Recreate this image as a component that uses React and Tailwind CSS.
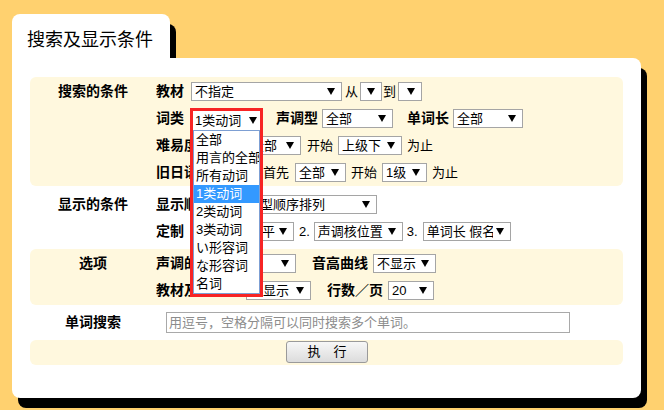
import React from "react";

const Arrow = () => (
  <span className="ml-auto shrink-0 w-0 h-0 border-x-[4px] border-x-transparent border-t-[7px] border-t-black" />
);

const Sel = ({ className = "", text }) => (
  <div
    className={`flex items-center h-[19px] shrink-0 bg-white border border-[#a5a5a5] pl-[3px] pr-[6px] overflow-hidden ${className}`}
  >
    {text && (
      <span className="flex-1 min-w-0 mr-[3px] overflow-hidden whitespace-nowrap">{text}</span>
    )}
    <Arrow />
  </div>
);

const B = ({ className = "", children }) => (
  <span className={`shrink-0 font-bold text-[14px] whitespace-nowrap overflow-hidden ${className}`}>
    {children}
  </span>
);

const T = ({ className = "", children }) => (
  <span className={`shrink-0 whitespace-nowrap ${className}`}>{children}</span>
);

const Row = ({ children }) => <div className="h-[27px] flex items-center">{children}</div>;

const Section = ({ label, cream, className = "", children }) => (
  <div className={`flex rounded-[6px] ${cream ? "bg-[#fff8de]" : ""} ${className}`}>
    <div className="w-[126px] h-[27px] shrink-0 flex items-center justify-center font-bold text-[14px]">
      {label}
    </div>
    <div className="flex-1">{children}</div>
  </div>
);

const options = ["全部", "用言的全部", "所有动词", "1类动词", "2类动词", "3类动词", "い形容词", "な形容词", "名词"];

export default function App() {
  return (
    <div className="w-[664px] h-[410px] bg-[#ffd16f] overflow-hidden pt-[14px] pl-[12px] text-[13px] leading-[17px] text-black font-['Liberation_Sans','Noto_Sans_CJK_SC',sans-serif]">
      <div className="w-[158px] h-[44px] bg-white rounded-t-[8px] shadow-[6px_10px_0_#000] pl-[15px] pt-[16px] text-[18px] leading-[20px]">
        搜索及显示条件
      </div>

      <div className="w-[629px] h-[340px] bg-white rounded-tr-[8px] rounded-b-[8px] shadow-[6px_10px_0_#000] px-[18px] pt-[19px]">
        {/* 搜索的条件 */}
        <Section label="搜索的条件" cream className="pt-[1px]">
          <Row>
            <B className="w-[35px]">教材</B>
            <Sel className="w-[151px]" text="不指定" />
            <T className="ml-[3px]">从</T>
            <Sel className="ml-[2px] w-[22px] pr-[5px]" />
            <T className="ml-[1px]">到</T>
            <Sel className="ml-[2px] w-[24px] pr-[6px]" />
          </Row>
          <Row>
            <B className="w-[36px]">词类</B>
            <div className="relative w-[71px] h-[19px] shrink-0">
              <div className="absolute left-[-2px] top-[-1px] z-10 w-[73px] border-[3px] border-[#f72424] bg-white">
                <div className="h-[19px] flex items-center pl-[2px] pr-[3px]">
                  <span className="whitespace-nowrap">1类动词</span>
                  <Arrow />
                </div>
                <div className="border border-[#7d9fd3]">
                  {options.map((o) => (
                    <div
                      key={o}
                      className={`h-[18px] leading-[18px] pl-[2px] whitespace-nowrap overflow-hidden ${
                        o === "1类动词" ? "bg-[#3399ff] text-white" : ""
                      }`}
                    >
                      {o}
                    </div>
                  ))}
                </div>
              </div>
            </div>
            <B className="ml-[13px]">声调型</B>
            <Sel className="ml-[4px] w-[71px]" text="全部" />
            <B className="ml-[14px]">单词长</B>
            <Sel className="ml-[4px] w-[70px]" text="全部" />
          </Row>
          <Row>
            <B className="w-[91px]">难易度</B>
            <Sel className="w-[54px]" text="全部" />
            <T className="ml-[6px]">开始</T>
            <Sel className="ml-[5px] w-[64px]" text="上级下" />
            <T className="ml-[5px]">为止</T>
          </Row>
          <Row>
            <B className="w-[107px]">旧日语</B>
            <T>首先</T>
            <Sel className="ml-[6px] w-[51px]" text="全部" />
            <T className="ml-[5px]">开始</T>
            <Sel className="ml-[5px] w-[45px]" text="1级" />
            <T className="ml-[5px]">为止</T>
          </Row>
        </Section>

        {/* 显示的条件 */}
        <Section label="显示的条件" className="pt-[5px] pb-[4px]">
          <Row>
            <B className="w-[61px]">显示顺序</B>
            <Sel className="w-[160px]" text="按声调型顺序排列" />
          </Row>
          <Row>
            <B className="w-[35px]">定制</B>
            <T className="w-[15px]">1.</T>
            <Sel className="w-[88px]" text="声调为高平" />
            <T className="ml-[5px]">2.</T>
            <Sel className="ml-[4px] w-[89px]" text="声调核位置" />
            <T className="ml-[4px]">3.</T>
            <Sel className="ml-[5px] w-[88px]" text="单词长 假名顺" />
          </Row>
        </Section>

        {/* 选项 */}
        <Section label="选项" cream className="py-[1px]">
          <Row>
            <B className="w-[74px]">声调的表示</B>
            <Sel className="w-[66px]" text="显示" />
            <B className="ml-[16px]">音高曲线</B>
            <Sel className="ml-[5px] w-[63px]" text="不显示" />
          </Row>
          <Row>
            <B className="w-[90px]">教材及课数</B>
            <Sel className="w-[65px]" text="不显示" />
            <B className="ml-[16px]">行数／页</B>
            <Sel className="ml-[5px] w-[46px]" text="20" />
          </Row>
        </Section>

        {/* 单词搜索 */}
        <div className="flex items-center h-[35px]">
          <div className="w-[126px] shrink-0 text-center font-bold text-[14px]">单词搜索</div>
          <input
            className="ml-[10px] w-[404px] h-[21px] border border-[#a9a9a9] px-[2px] text-[13px] outline-none placeholder:text-[#8c8c8c]"
            placeholder="用逗号，空格分隔可以同时搜索多个单词。"
          />
        </div>

        <div className="h-[25px] rounded-[6px] bg-[#fff8de] pt-[1px]">
          <button className="ml-[256px] w-[82px] h-[22px] border border-[#9a9a9a] rounded-[3px] bg-gradient-to-b from-[#f7f7f7] to-[#dcdcdc] text-[13px] leading-[20px]">
            执　行
          </button>
        </div>
      </div>
    </div>
  );
}
